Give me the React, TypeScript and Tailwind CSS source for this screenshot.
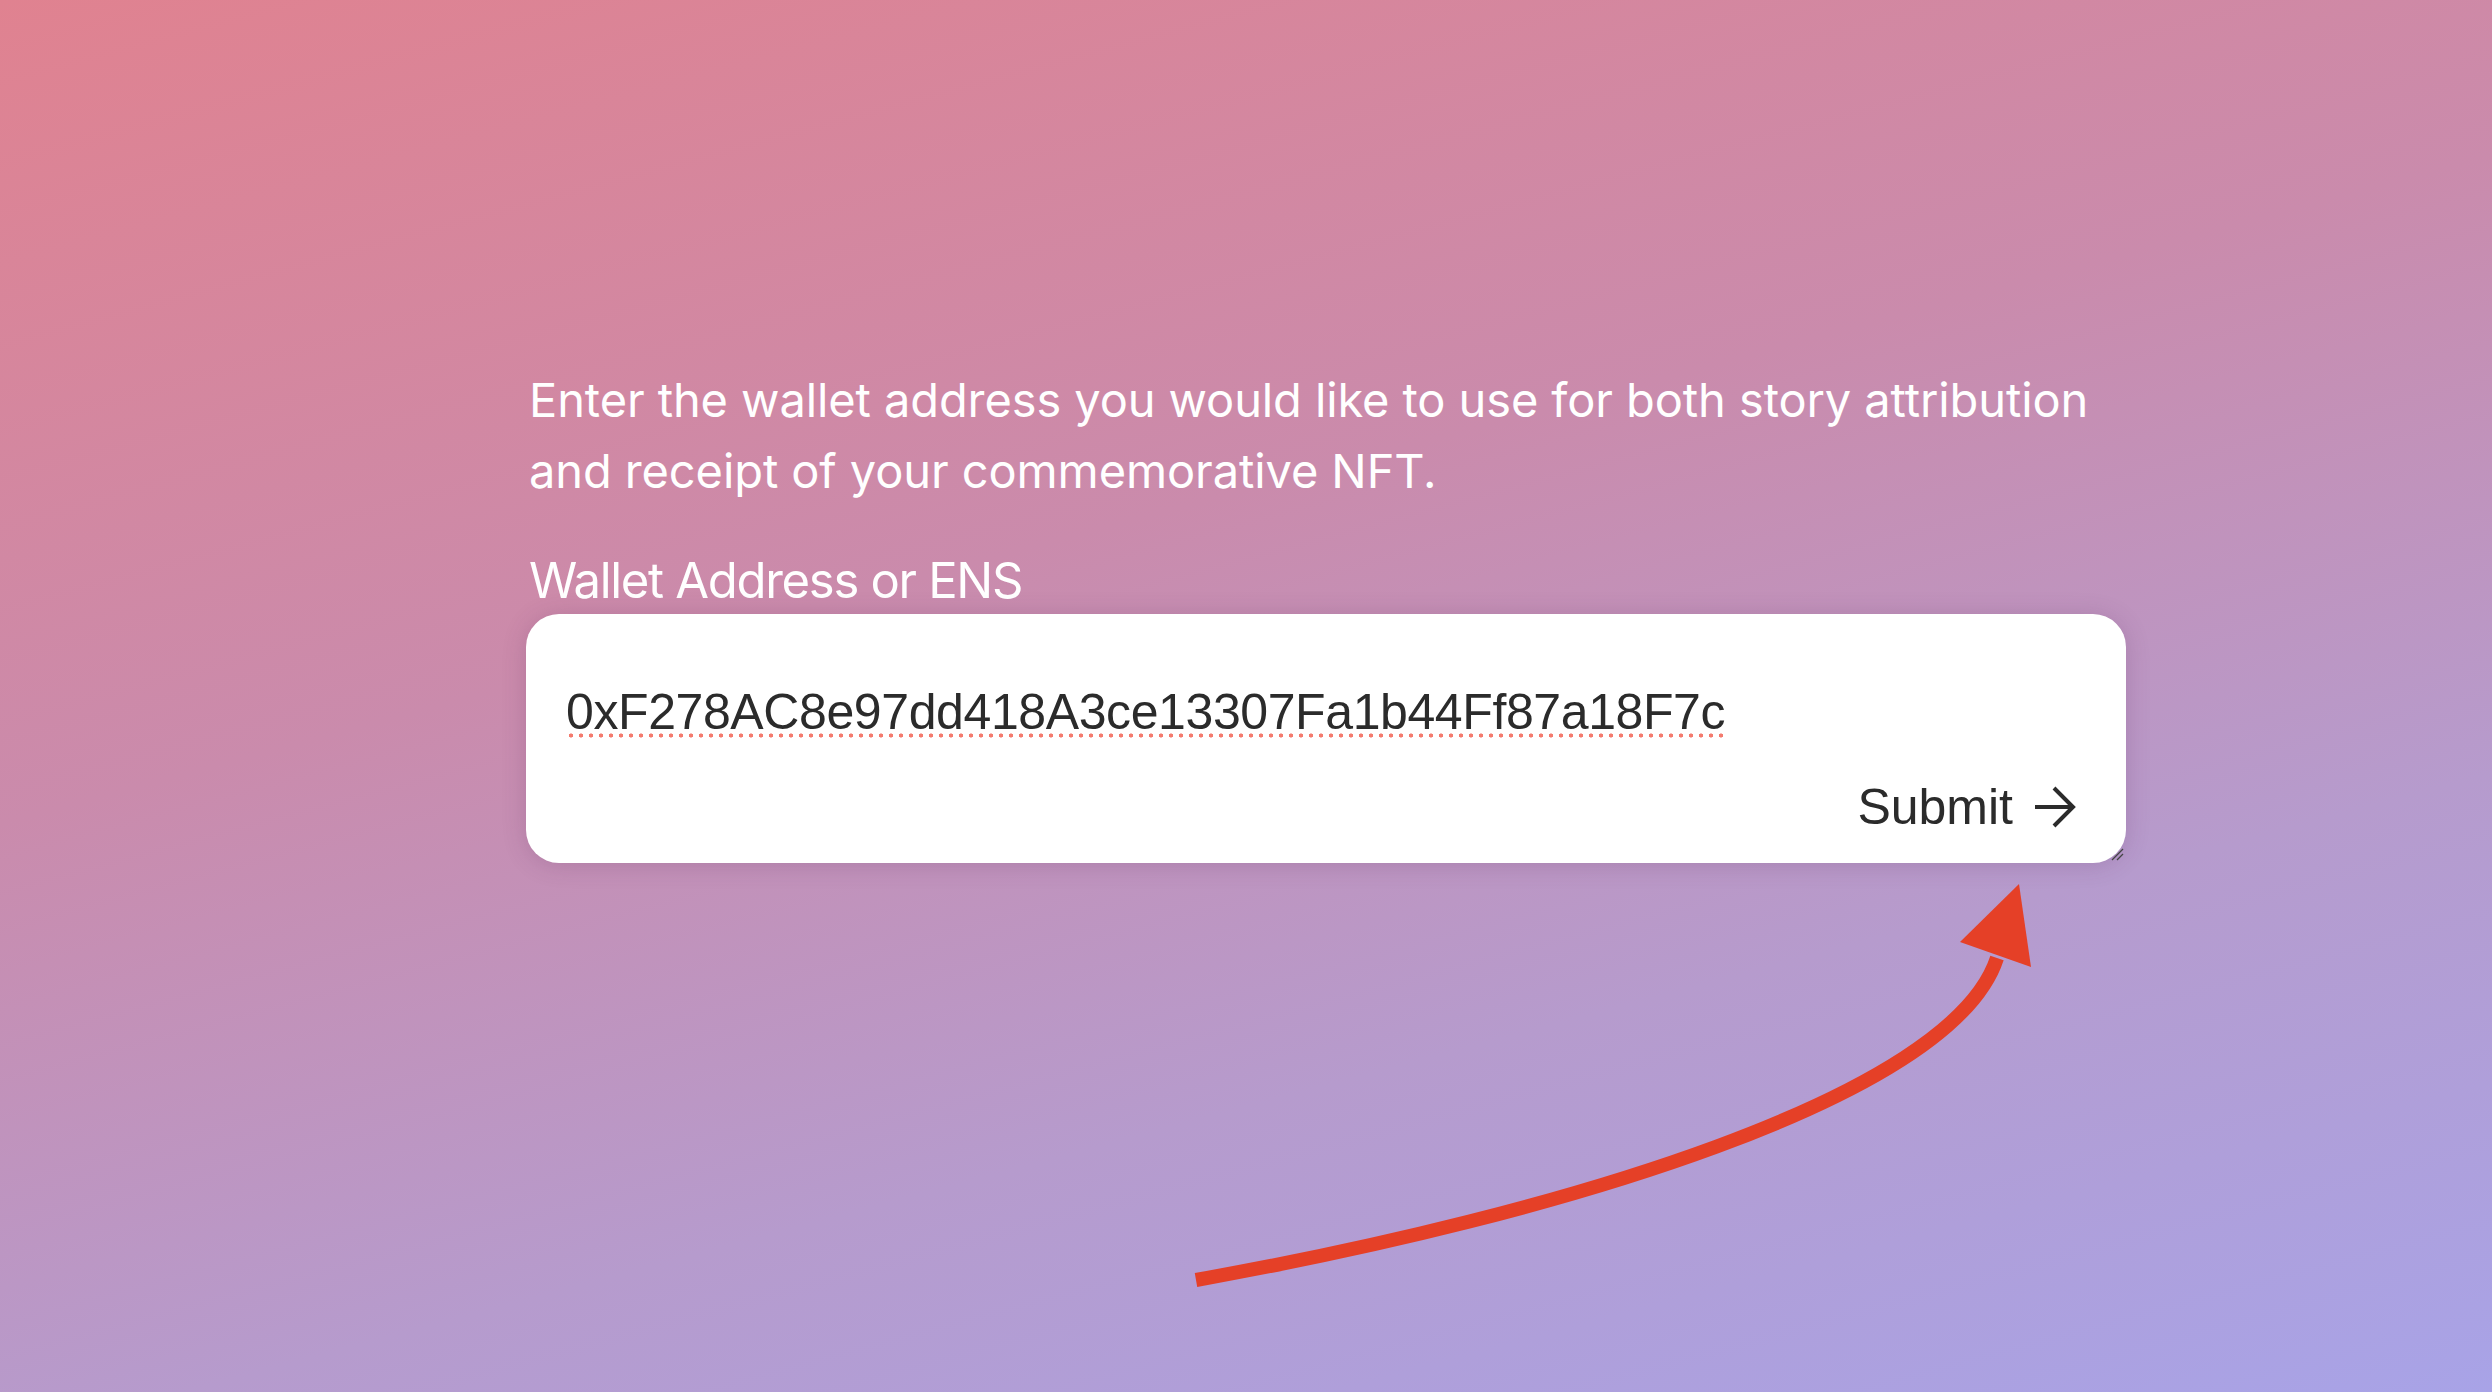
import React from "react";

export default function App() {
  return (
    <div className="relative w-[2492px] h-[1392px] overflow-hidden bg-[linear-gradient(165deg,#e08290_0%,#ca8bac_40%,#b69bcd_70%,#a8a3e7_100%)]">
      <div className="flex flex-col pl-[526px] pt-[364px]">
        <p className="pl-[3px] text-white text-[47px] leading-[71px] tracking-[-0.1px] font-['Inter',sans-serif]">
          Enter the wallet address you would like to use for both story attribution
          <br />
          and receipt of your commemorative NFT.
        </p>
        <label className="mt-[45px] pl-[3px] text-white text-[49px] leading-[60px] tracking-[-1.3px] font-['Inter',sans-serif]">
          Wallet Address or ENS
        </label>
        <div className="relative mt-[3px] w-[1600px] h-[249px] rounded-[33px] bg-white shadow-[0_2px_24px_rgba(90,40,90,0.2)] flex flex-col pl-[40px] pr-[50px] pt-[68px] font-['Liberation_Sans',Arial,sans-serif]">
          <div className="text-[#2b2b2b] text-[50px] leading-[60px] tracking-[-0.4px]">
            <span className="inline-block relative">
              0xF278AC8e97dd418A3ce13307Fa1b44Ff87a18F7c
              <span className="absolute left-0 right-0 top-[51px] h-[5px] bg-[radial-gradient(circle,#f47b6e_1.8px,transparent_2.3px)] bg-[length:10px_5px] bg-repeat-x" />
            </span>
          </div>
          <div className="mt-[35px] flex justify-end">
            <button className="flex items-center gap-[21px] text-[#2b2b2b] text-[50px] leading-[60px]">
              <span>Submit</span>
              <svg width="42" height="42" viewBox="0 0 42 42" fill="none" stroke="#2b2b2b" strokeWidth="4" strokeLinecap="butt" strokeLinejoin="miter">
                <path d="M1 21 H39" />
                <path d="M20 2 L39 21 L20 40" />
              </svg>
            </button>
          </div>
          <svg className="absolute right-[2px] bottom-[2px]" width="14" height="14" viewBox="0 0 14 14" fill="none" stroke="#444" strokeWidth="1.2">
            <path d="M2 13 L13 2" />
            <path d="M7 13 L13 7" />
          </svg>
        </div>
      </div>
      <svg className="absolute left-0 top-0 pointer-events-none" width="2492" height="1392" viewBox="0 0 2492 1392">
        <path d="M1196 1280 C1560 1215 1952 1097 1997 958" fill="none" stroke="#e54027" strokeWidth="14" />
        <polygon points="2019,884 1960,942 2031,967" fill="#e54027" />
      </svg>
    </div>
  );
}
